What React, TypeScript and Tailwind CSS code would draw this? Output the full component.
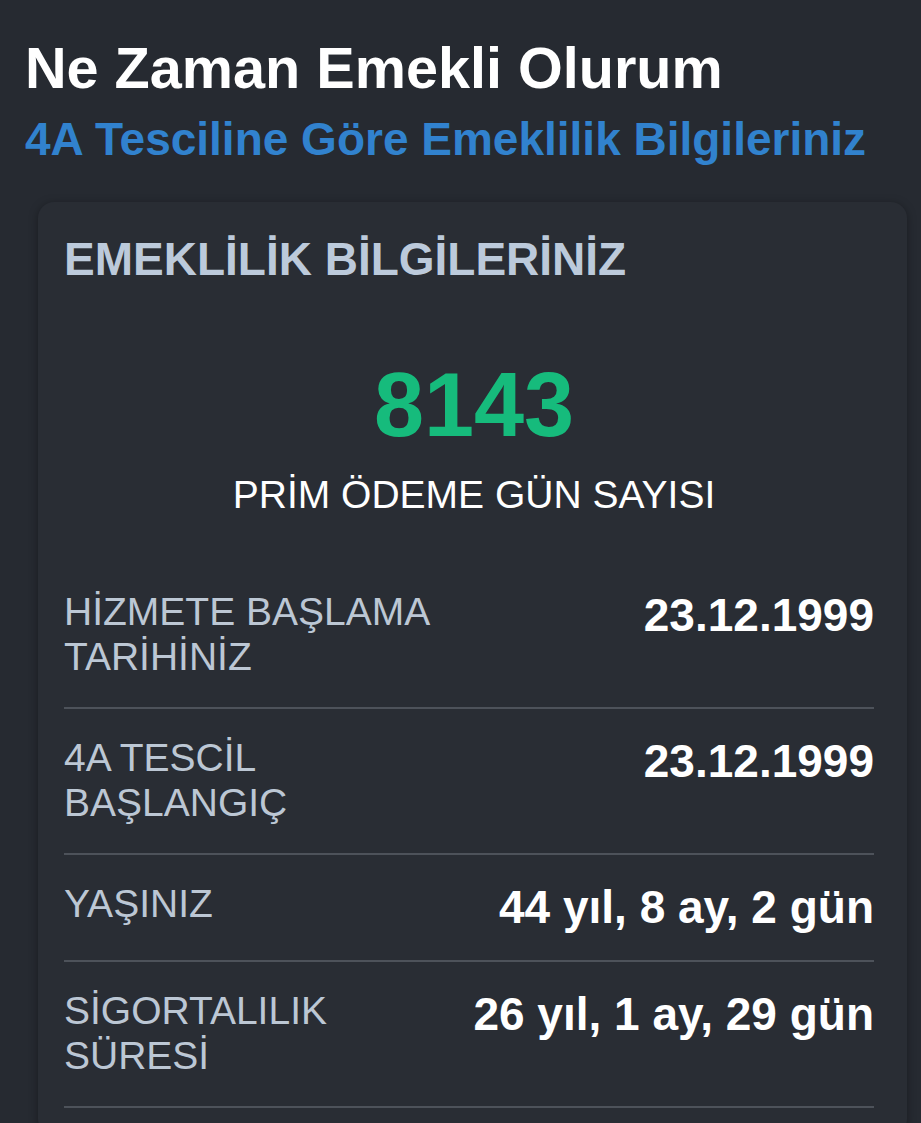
import React from "react";

interface InfoRow {
  label: string;
  value: string;
}

const ROWS: InfoRow[] = [
  { label: "HİZMETE BAŞLAMA TARİHİNİZ", value: "23.12.1999" },
  { label: "4A TESCİL BAŞLANGIÇ", value: "23.12.1999" },
  { label: "YAŞINIZ", value: "44 yıl, 8 ay, 2 gün" },
  { label: "SİGORTALILIK SÜRESİ", value: "26 yıl, 1 ay, 29 gün" },
];

export default function App() {
  return (
    <div className="min-h-screen bg-[#262a31] font-['Liberation_Sans',Arial,sans-serif] pt-[35px] pb-10">
      {/* Page heading */}
      <div className="px-[25px]">
        <h1 className="text-[57.6px] font-bold text-white leading-[1.15]">
          Ne Zaman Emekli Olurum
        </h1>
        <h2 className="mt-[12px] text-[46px] font-bold text-[#3182ce] leading-[1.15]">
          4A Tesciline Göre Emeklilik Bilgileriniz
        </h2>
      </div>

      {/* Card */}
      <div className="mt-[36px] ml-[38px] mr-[14px] rounded-[16px] bg-[#292d34] shadow-[0_2px_10px_rgba(0,0,0,0.35)] pt-[31px] pl-[26px] pr-[33px] pb-[27px]">
        <h3 className="text-[46px] font-bold text-[#bccadb] leading-[1.15]">
          EMEKLİLİK BİLGİLERİNİZ
        </h3>

        <div className="mt-[68px] mb-[46px] pl-[10px] flex flex-col items-center">
          <div className="text-[90px] font-bold text-[#16bb7c] leading-[1.15]">8143</div>
          <div className="mt-[15px] text-[39px] text-white leading-[1.15]">
            PRİM ÖDEME GÜN SAYISI
          </div>
        </div>

        <div className="flex flex-col">
          {ROWS.map((row) => (
            <div
              key={row.label}
              className="flex items-start justify-between py-[27px] border-b-2 border-[#4d525a]"
            >
              <div className="w-1/2 text-[39px] text-[#bcc7d4] leading-[1.15]">{row.label}</div>
              <div className="flex-1 text-right whitespace-nowrap text-[46px] font-bold text-white leading-[1.12]">
                {row.value}
              </div>
            </div>
          ))}
        </div>
      </div>
    </div>
  );
}
